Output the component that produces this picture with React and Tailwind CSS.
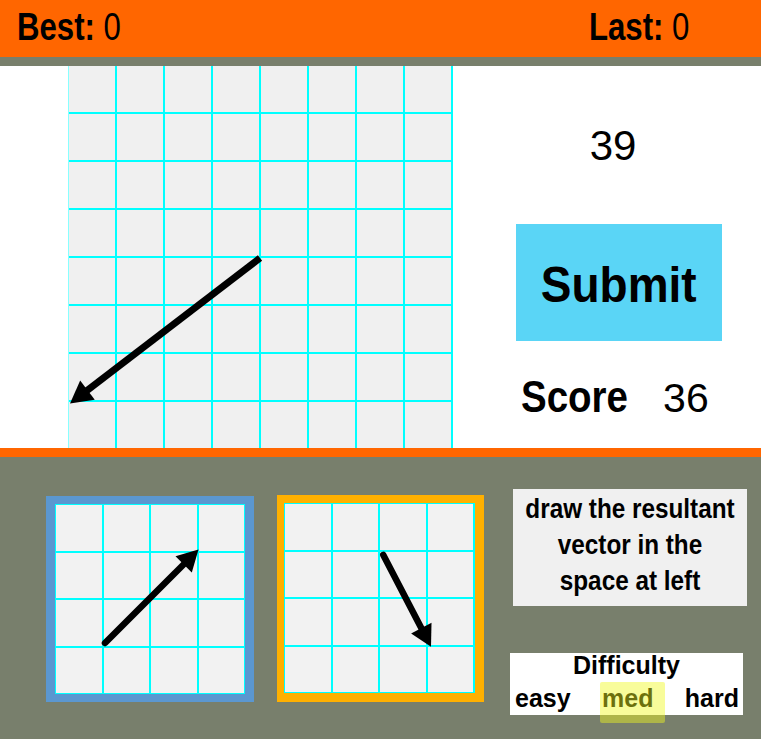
import React from "react";

const CYAN = "#00ffff";

function Arrow({ x1, y1, x2, y2, head = 22, hw = 12, sw = 7, cap = "round" }) {
  const dx = x2 - x1;
  const dy = y2 - y1;
  const len = Math.hypot(dx, dy);
  const ux = dx / len;
  const uy = dy / len;
  const bx = x2 - ux * head;
  const by = y2 - uy * head;
  const px = -uy;
  const py = ux;
  const pts = `${x2},${y2} ${bx + px * hw},${by + py * hw} ${bx - px * hw},${by - py * hw}`;
  return (
    <g>
      <line x1={x1} y1={y1} x2={bx + ux * 3} y2={by + uy * 3} stroke="#000" strokeWidth={sw} strokeLinecap={cap} />
      <polygon points={pts} fill="#000" />
    </g>
  );
}

function MainGrid() {
  const v = [];
  for (let i = 0; i <= 8; i++) {
    if (i === 0) v.push(<rect key={"v" + i} x={0} y={0} width={1} height={382} fill="#8ff" />);
    else v.push(<rect key={"v" + i} x={i * 48 - 1} y={0} width={2} height={382} fill={CYAN} />);
  }
  const h = [];
  for (let k = 1; k <= 7; k++) {
    h.push(<rect key={"h" + k} x={0} y={k * 48 - 2} width={385} height={2} fill={CYAN} />);
  }
  return (
    <svg width="385" height="382" className="block shrink-0 bg-[#f0f0f0]">
      {h}
      {v}
      <Arrow x1={192} y1={192} x2={2} y2={337.5} head={22} hw={12} sw={7} cap="butt" />
    </svg>
  );
}

function SmallGrid({ arrow, width = 190 }) {
  const lines = [];
  for (let i = 0; i <= 4; i++) {
    const p = Math.round(i * 47.5);
    lines.push(<rect key={"v" + i} x={p - 1} y={0} width={2} height={190} fill={CYAN} />);
    lines.push(<rect key={"h" + i} x={0} y={p - 1} width={width} height={2} fill={CYAN} />);
  }
  return (
    <svg width={width} height="190" className="block bg-[#f2f2f2]">
      {lines}
      <Arrow head={21} hw={11.5} sw={6.5} {...arrow} />
    </svg>
  );
}

export default function App() {
  return (
    <div
      className="relative w-[761px] h-[739px] overflow-hidden flex flex-col text-black"
      style={{ fontFamily: '"Liberation Sans", Arial, sans-serif' }}
    >
      {/* header */}
      <div className="h-[57px] shrink-0 bg-[#ff6600] flex items-start pt-[8px]">
        <div className="w-[589px] pl-[17px]">
          <span className="inline-block whitespace-nowrap origin-left scale-x-[0.82] text-[38px] leading-none">
            <b>Best:</b> 0
          </span>
        </div>
        <div>
          <span className="inline-block whitespace-nowrap origin-left scale-x-[0.82] text-[38px] leading-none">
            <b>Last:</b> 0
          </span>
        </div>
      </div>
      <div className="h-[9px] shrink-0 bg-[#787f6c]" />

      {/* main area */}
      <div className="h-[382px] shrink-0 bg-white flex">
        <div className="ml-[68px]">
          <MainGrid />
        </div>
        <div className="flex flex-col pl-[63px]">
          <div className="mt-[59px] w-[206px] pr-[12px] text-center text-[42px] leading-none">39</div>
          <div className="mt-[57px] w-[206px] h-[117px] bg-[#5ad5f6] flex items-center justify-center">
            <span className="mt-[5px] inline-block scale-x-[0.92] text-[50px] font-bold leading-none">Submit</span>
          </div>
          <div className="mt-[33px] flex items-baseline">
            <span className="ml-[5px] inline-block origin-left scale-x-[0.855] text-[45px] font-bold leading-none">
              Score
            </span>
            <span className="ml-[17px] text-[41px] leading-none">36</span>
          </div>
        </div>
      </div>
      <div className="h-[9px] shrink-0 bg-[#ff6600]" />

      {/* bottom area */}
      <div className="flex-1 bg-[#787f6c] flex items-start pl-[46px]">
        <div className="mt-[39px] border-y-[8px] border-x-[9px] border-[#5b97d0]">
          <SmallGrid arrow={{ x1: 50, y1: 139, x2: 143.5, y2: 45.5 }} />
        </div>
        <div className="ml-[23px] mt-[38px] border-[#ffb000] border-l-[7px] border-t-[8px] border-r-[9px] border-b-[9px]">
          <SmallGrid width={191} arrow={{ x1: 99.3, y1: 52, x2: 147, y2: 143.7 }} />
        </div>
        <div className="ml-[26px] flex flex-col">
          <div className="ml-[3px] mt-[32px] w-[234px] h-[117px] bg-[#f0f0f0] pt-[2px]">
            <div className="scale-x-[0.9] whitespace-nowrap text-center text-[27px] font-bold leading-[36px]">
              draw the resultant
              <br />
              vector in the
              <br />
              space at left
            </div>
          </div>
          <div className="relative mt-[47px] w-[233px] h-[62px] bg-white text-[25px] font-bold">
            <div className="text-center leading-[25px]">Difficulty</div>
            <div className="flex justify-between pl-[5px] pr-[4px] pt-[6px] leading-[28px]">
              <span>easy</span>
              <span>med</span>
              <span>hard</span>
            </div>
            <div className="absolute left-[90px] top-[29px] w-[65px] h-[41px] rounded-[2px] bg-[rgba(240,248,30,0.45)]" />
          </div>
        </div>
      </div>
    </div>
  );
}
